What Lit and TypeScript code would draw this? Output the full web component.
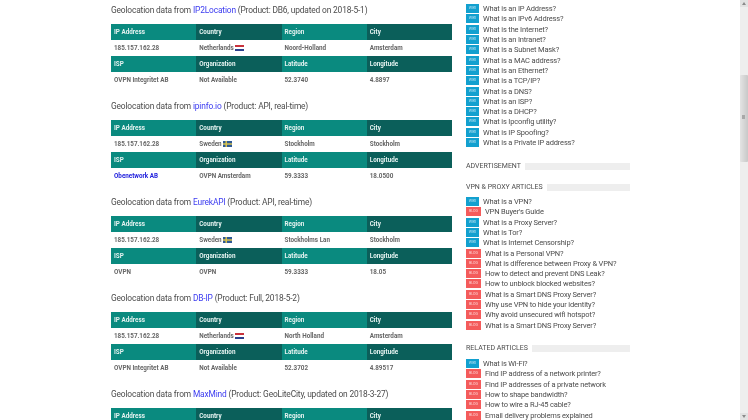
import { LitElement, html, css } from "lit";
import { customElement } from "lit/decorators.js";

type Cell = string | { flag: "nl" | "se"; text: string } | { link: string };
interface Geo { src: string; rest: string; row1: Cell[]; row2: Cell[]; }

const geos: Geo[] = [
  { src: "IP2Location", rest: " (Product: DB6, updated on 2018-5-1)",
    row1: ["185.157.162.28", { flag: "nl", text: "Netherlands" }, "Noord-Holland", "Amsterdam"],
    row2: ["OVPN Integritet AB", "Not Available", "52.3740", "4.8897"] },
  { src: "ipinfo.io", rest: " (Product: API, real-time)",
    row1: ["185.157.162.28", { flag: "se", text: "Sweden" }, "Stockholm", "Stockholm"],
    row2: [{ link: "Obenetwork AB" }, "OVPN Amsterdam", "59.3333", "18.0500"] },
  { src: "EurekAPI", rest: " (Product: API, real-time)",
    row1: ["185.157.162.28", { flag: "se", text: "Sweden" }, "Stockholms Lan", "Stockholm"],
    row2: ["OVPN", "OVPN", "59.3333", "18.05"] },
  { src: "DB-IP", rest: " (Product: Full, 2018-5-2)",
    row1: ["185.157.162.28", { flag: "nl", text: "Netherlands" }, "North Holland", "Amsterdam"],
    row2: ["OVPN Integritet AB", "Not Available", "52.3702", "4.89517"] },
  { src: "MaxMind", rest: " (Product: GeoLiteCity, updated on 2018-3-27)",
    row1: ["185.157.162.28", { flag: "nl", text: "Netherlands" }, "North Holland", "Amsterdam"],
    row2: ["OVPN Integritet AB", "Not Available", "52.3702", "4.89517"] },
];

type Item = [("w" | "b"), string];
const first: Item[] = ["What is an IP Address?", "What is an IPv6 Address?", "What is the Internet?", "What is an Intranet?", "What is a Subnet Mask?", "What is a MAC address?", "What is an Ethernet?", "What is a TCP/IP?", "What is a DNS?", "What is an ISP?", "What is a DHCP?", "What is Ipconfig utility?", "What is IP Spoofing?", "What is a Private IP address?"].map((t) => ["w", t] as Item);
const vpn: Item[] = [["w", "What is a VPN?"], ["b", "VPN Buyer's Guide"], ["w", "What is a Proxy Server?"], ["w", "What is Tor?"], ["w", "What is Internet Censorship?"], ["b", "What is a Personal VPN?"], ["b", "What is difference between Proxy & VPN?"], ["b", "How to detect and prevent DNS Leak?"], ["b", "How to unblock blocked websites?"], ["b", "What is a Smart DNS Proxy Server?"], ["b", "Why use VPN to hide your identity?"], ["b", "Why avoid unsecured wifi hotspot?"], ["b", "What is a Smart DNS Proxy Server?"]];
const related: Item[] = [["w", "What is Wi-Fi?"], ["b", "Find IP address of a network printer?"], ["b", "Find IP addresses of a private network"], ["b", "How to shape bandwidth?"], ["b", "How to wire a RJ-45 cable?"], ["b", "Email delivery problems explained"]];

@customElement("app-root")
export class AppRoot extends LitElement {
  static styles = css`
    :host { display: block; width: 748px; height: 420px; overflow: hidden; position: relative; background: #fff; font-family: Roboto, "Noto Sans", sans-serif; }
    .page { display: flex; gap: 14px; padding: 3px 0 0 111px; filter: blur(0.35px); }
    main { width: 341px; flex: none; }
    .geo { margin-bottom: 11px; }
    h3 { margin: 0 0 7px; font-size: 8.4px; letter-spacing: -0.16px; line-height: 14px; height: 14px; font-weight: 400; color: #4c4c4c; white-space: nowrap; }
    h3 a { color: #3b3bf0; }
    .tbl { display: grid; grid-template-columns: repeat(4, 1fr); }
    .h { height: 16px; line-height: 16px; padding-left: 3px; font-size: 6.3px; font-weight: 700; color: #e4f2f0; white-space: nowrap; }
    .h.l { background: #0a8a7f; }
    .h.d { background: #0b5f5a; }
    .v { height: 16px; line-height: 16px; padding-left: 3px; font-size: 6.3px; font-weight: 700; color: #666; display: flex; align-items: center; gap: 1.5px; white-space: nowrap; }
    .v a { color: #2222dd; }
    .flag { width: 9px; height: 6px; flex: none; display: block; }
    aside { width: 165px; flex: none; padding-top: 0.5px; }
    .row { height: 10.3px; display: flex; align-items: center; gap: 4px; font-size: 7.5px; letter-spacing: -0.17px; color: #4c4c4c; white-space: nowrap; }
    .badge { height: 9px; line-height: 9px; letter-spacing: 0; text-align: center; font-size: 3.6px; flex: none; color: #bfe4f2; }
    .badge.w { width: 13px; background: #12a0cf; }
    .badge.b { width: 15px; background: #f45b5b; color: #fbd0d0; }
    .title { display: flex; align-items: center; gap: 4.5px; height: 10px; font-size: 7px; color: #4c4c4c; white-space: nowrap; width: 164px; }
    .title i { flex: 1; height: 7px; background: #eee; display: block; }
    .t1 { margin-top: 13.5px; }
    .t2 { margin-top: 11px; margin-bottom: 4.3px; }
    .t3 { margin-top: 13px; margin-bottom: 5.2px; }
    .scroll { position: absolute; right: 0; top: 0; width: 8px; height: 420px; background: #eeeeee; }
    .btn { position: absolute; left: 0; width: 8px; height: 7px; background: #e2e2e2; display: flex; align-items: center; justify-content: center; }
    .btn svg { width: 4px; height: 3px; display: block; }
    .btn.top { top: 0; }
    .btn.bot { bottom: 0; }
    .thumb { position: absolute; left: 0; top: 75px; width: 8px; height: 87px; background: linear-gradient(90deg, #e4e4e4, #c8c8c8); border-radius: 1px; }
    .grip { position: absolute; left: 2px; top: 40px; width: 3px; height: 4px; background: #a8a8a8; }
  `;

  private flag(k: "nl" | "se") {
    return k === "nl"
      ? html`<svg class="flag" viewBox="0 0 9 6"><rect width="9" height="6" fill="#fff"/><rect width="9" height="2" fill="#c8323c"/><rect y="4" width="9" height="2" fill="#2c3f8c"/></svg>`
      : html`<svg class="flag" viewBox="0 0 9 6"><rect width="9" height="6" fill="#2f5a96"/><rect x="2.5" width="1.4" height="6" fill="#e0c84a"/><rect y="2.3" width="9" height="1.4" fill="#e0c84a"/></svg>`;
  }

  private cell(c: Cell) {
    if (typeof c === "string") return html`<div class="v">${c}</div>`;
    if ("link" in c) return html`<div class="v"><a>${c.link}</a></div>`;
    return html`<div class="v">${c.text}${this.flag(c.flag)}</div>`;
  }

  private heads(names: string[]) {
    return names.map((n, i) => html`<div class="h ${i % 2 ? "d" : "l"}">${n}</div>`);
  }

  private items(list: Item[]) {
    return list.map(([k, t]) => html`<div class="row"><span class="badge ${k}">${k === "w" ? "WIKI" : "BLOG"}</span><span>${t}</span></div>`);
  }

  render() {
    return html`
      <div class="page">
        <main>
          ${geos.map((g) => html`
            <section class="geo">
              <h3>Geolocation data from <a>${g.src}</a>${g.rest}</h3>
              <div class="tbl">
                ${this.heads(["IP Address", "Country", "Region", "City"])}
                ${g.row1.map((c) => this.cell(c))}
                ${this.heads(["ISP", "Organization", "Latitude", "Longitude"])}
                ${g.row2.map((c) => this.cell(c))}
              </div>
            </section>`)}
        </main>
        <aside>
          ${this.items(first)}
          <div class="title t1">ADVERTISEMENT<i></i></div>
          <div class="title t2">VPN &amp; PROXY ARTICLES<i></i></div>
          ${this.items(vpn)}
          <div class="title t3">RELATED ARTICLES<i></i></div>
          ${this.items(related)}
        </aside>
      </div>
      <div class="scroll">
        <div class="btn top"><svg viewBox="0 0 4 3"><path d="M2 0L4 3H0Z" fill="#8a8a8a"/></svg></div>
        <div class="thumb"><div class="grip"></div></div>
        <div class="btn bot"><svg viewBox="0 0 4 3"><path d="M2 3L4 0H0Z" fill="#8a8a8a"/></svg></div>
      </div>
    `;
  }
}
